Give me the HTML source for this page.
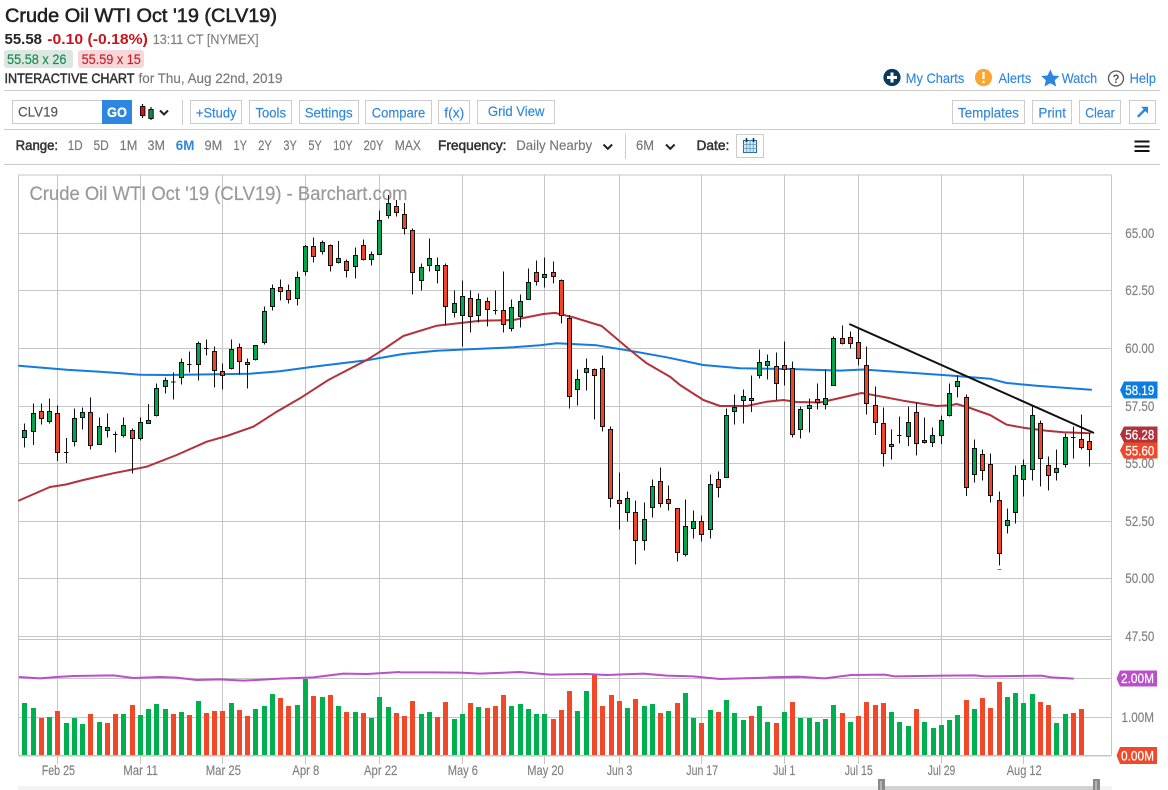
<!DOCTYPE html>
<html><head><meta charset="utf-8"><title>Crude Oil WTI Oct '19 (CLV19)</title>
<style>
html,body{margin:0;padding:0;background:#fff;width:1168px;height:790px;overflow:hidden}
svg{display:block}
text{font-family:"Liberation Sans",sans-serif;font-size:13.8px;fill:#777;stroke:#777;stroke-width:.15}
.b{fill:#2f86dd;stroke:#2f86dd}
.k{fill:#333;stroke:#333;stroke-width:.5}
.a{fill:#808080;stroke:#808080}
.w{fill:#fff;stroke:#fff;stroke-width:.25}
.c{shape-rendering:crispEdges}
.btn{fill:#fff;stroke:#ccc;shape-rendering:crispEdges}
</style></head><body>
<svg width="1168" height="790" viewBox="0 0 1168 790" xmlns="http://www.w3.org/2000/svg">
<rect width="1168" height="790" fill="#fff"/>
<!-- header -->
<text x="5" y="22" style="font-size:19.5px;fill:#222;stroke:#222;stroke-width:.55" textLength="272" lengthAdjust="spacingAndGlyphs">Crude Oil WTI Oct '19 (CLV19)</text>
<text x="4.5" y="44" style="font-size:15px;font-weight:bold;fill:#222;stroke:none" textLength="37.5" lengthAdjust="spacingAndGlyphs">55.58</text>
<text x="47.3" y="44" style="font-size:15px;font-weight:bold;fill:#c5161d;stroke:none" textLength="100.6" lengthAdjust="spacingAndGlyphs">-0.10 (-0.18%)</text>
<text x="152.7" y="44" style="fill:#808080;stroke:#808080" textLength="106" lengthAdjust="spacingAndGlyphs">13:11 CT [NYMEX]</text>
<rect x="4" y="50" width="69" height="18" rx="3" fill="#dbe7e0"/>
<text x="7" y="64" style="fill:#1a8a50;stroke:#1a8a50" textLength="59.5" lengthAdjust="spacingAndGlyphs">55.58 x 26</text>
<rect x="78" y="50" width="66" height="18" rx="3" fill="#f7d6da"/>
<text x="81.6" y="64" style="fill:#c8202c;stroke:#c8202c" textLength="59.2" lengthAdjust="spacingAndGlyphs">55.59 x 15</text>
<text x="4.5" y="83" class="k" textLength="130" lengthAdjust="spacingAndGlyphs">INTERACTIVE CHART</text>
<text x="138.5" y="83" textLength="144" lengthAdjust="spacingAndGlyphs">for Thu, Aug 22nd, 2019</text>
<!-- top-right links -->
<circle cx="892" cy="77.5" r="8.6" fill="#0b3a5e"/>
<path d="M892 72.5V82.5M887 77.5H897" stroke="#fff" stroke-width="3" fill="none"/>
<text x="905.8" y="83" class="b" textLength="58.5" lengthAdjust="spacingAndGlyphs">My Charts</text>
<circle cx="983.5" cy="77.5" r="8.6" fill="#fba72f"/>
<path d="M983.5 72V79" stroke="#fff" stroke-width="2.2"/><circle cx="983.5" cy="82" r="1.2" fill="#fff"/>
<text x="998.5" y="83" class="b" textLength="32.8" lengthAdjust="spacingAndGlyphs">Alerts</text>
<path d="M1050.3 69.5L1053 75.5 1059.5 76 1054.7 80.3 1056.2 86.5 1050.3 83.2 1044.4 86.5 1045.9 80.3 1041.1 76 1047.6 75.5Z" fill="#2b86e0"/>
<text x="1061.8" y="83" class="b" textLength="35.4" lengthAdjust="spacingAndGlyphs">Watch</text>
<circle cx="1116" cy="78.5" r="7.5" fill="none" stroke="#555" stroke-width="1.3"/>
<text x="1112.6" y="83" style="font-size:12px;font-weight:bold;fill:#555;stroke:none" textLength="6.8" lengthAdjust="spacingAndGlyphs">?</text>
<text x="1129.6" y="83" class="b" textLength="26.4" lengthAdjust="spacingAndGlyphs">Help</text>
<path class="c" d="M4 90.5H1160M4 129.5H1160M4 164.5H1160" stroke="#ccc" fill="none"/>
<!-- toolbar -->
<rect class="btn" x="12.5" y="100.5" width="90" height="23"/>
<text x="18" y="116.5" style="fill:#555;stroke:#555" textLength="40" lengthAdjust="spacingAndGlyphs">CLV19</text>
<rect class="c" x="102" y="100" width="30" height="24" fill="#2d87e0"/>
<text x="107" y="117" class="w" style="font-weight:bold" textLength="20" lengthAdjust="spacingAndGlyphs">GO</text>
<path d="M142.5 104V118M151 107V120" stroke="#111" stroke-width="1.2"/>
<rect x="140.5" y="106.5" width="4.4" height="9" fill="#d8131c" stroke="#111"/>
<rect x="148.8" y="109.5" width="4.4" height="9" fill="#0a8a40" stroke="#111"/>
<path d="M160 110.5l4 4 4-4" fill="none" stroke="#222" stroke-width="2"/>
<path class="c" d="M182.5 100V125" stroke="#ccc"/>
<rect class="btn" x="190.5" y="100.5" width="51" height="23"/>
<text x="195.9" y="117.5" class="b" textLength="40.6" lengthAdjust="spacingAndGlyphs">+Study</text>
<rect class="btn" x="249.5" y="100.5" width="42" height="23"/>
<text x="255.5" y="117.5" class="b" textLength="30.5" lengthAdjust="spacingAndGlyphs">Tools</text>
<rect class="btn" x="299.5" y="100.5" width="59" height="23"/>
<text x="304.7" y="117.5" class="b" textLength="48" lengthAdjust="spacingAndGlyphs">Settings</text>
<rect class="btn" x="365.5" y="100.5" width="66" height="23"/>
<text x="371.7" y="117.5" class="b" textLength="53.6" lengthAdjust="spacingAndGlyphs">Compare</text>
<rect class="btn" x="438.5" y="100.5" width="31" height="23"/>
<text x="444.3" y="117.5" class="b" textLength="20" lengthAdjust="spacingAndGlyphs">f(x)</text>
<rect class="btn" x="477.5" y="100.5" width="77" height="23"/>
<text x="487.9" y="116" class="b" textLength="56.6" lengthAdjust="spacingAndGlyphs">Grid View</text>
<rect class="btn" x="952.5" y="100.5" width="72" height="23"/>
<text x="958" y="117.5" class="b" textLength="61" lengthAdjust="spacingAndGlyphs">Templates</text>
<rect class="btn" x="1032.5" y="100.5" width="39" height="23"/>
<text x="1038.4" y="117.5" class="b" textLength="27.6" lengthAdjust="spacingAndGlyphs">Print</text>
<rect class="btn" x="1079.5" y="100.5" width="41" height="23"/>
<text x="1085.3" y="117.5" class="b" textLength="29.4" lengthAdjust="spacingAndGlyphs">Clear</text>
<rect class="btn" x="1129.5" y="100.5" width="26" height="23"/>
<path d="M1137.8 116.8L1145 109.6" stroke="#2b86e0" stroke-width="2.4"/><path d="M1141 106.8H1148V113.8Z" fill="#2b86e0"/>
<!-- range row -->
<text x="15.6" y="150" class="k" textLength="42.5" lengthAdjust="spacingAndGlyphs">Range:</text>
<text x="67.8" y="150" textLength="14.9" lengthAdjust="spacingAndGlyphs">1D</text>
<text x="93.5" y="150" textLength="15.3" lengthAdjust="spacingAndGlyphs">5D</text>
<text x="119.6" y="150" textLength="17.8" lengthAdjust="spacingAndGlyphs">1M</text>
<text x="147.5" y="150" textLength="17.5" lengthAdjust="spacingAndGlyphs">3M</text>
<text x="175.8" y="150" style="fill:#2f86dd;stroke:none;font-weight:bold" textLength="18.6" lengthAdjust="spacingAndGlyphs">6M</text>
<text x="204.5" y="150" textLength="17.8" lengthAdjust="spacingAndGlyphs">9M</text>
<text x="233.5" y="150" textLength="13.4" lengthAdjust="spacingAndGlyphs">1Y</text>
<text x="258.1" y="150" textLength="13.8" lengthAdjust="spacingAndGlyphs">2Y</text>
<text x="283.4" y="150" textLength="13.4" lengthAdjust="spacingAndGlyphs">3Y</text>
<text x="308.4" y="150" textLength="13.4" lengthAdjust="spacingAndGlyphs">5Y</text>
<text x="333.3" y="150" textLength="19.4" lengthAdjust="spacingAndGlyphs">10Y</text>
<text x="363.5" y="150" textLength="20.1" lengthAdjust="spacingAndGlyphs">20Y</text>
<text x="394.8" y="150" textLength="26.1" lengthAdjust="spacingAndGlyphs">MAX</text>
<text x="438" y="150" class="k" textLength="68.5" lengthAdjust="spacingAndGlyphs">Frequency:</text>
<text x="516.2" y="150" textLength="76" lengthAdjust="spacingAndGlyphs">Daily Nearby</text>
<path d="M603.5 144.5l4.3 4.3 4.3-4.3" fill="none" stroke="#222" stroke-width="2"/>
<path class="c" d="M625.5 134V159" stroke="#ccc"/>
<text x="636" y="150" textLength="18" lengthAdjust="spacingAndGlyphs">6M</text>
<path d="M666 144.5l4.3 4.3 4.3-4.3" fill="none" stroke="#222" stroke-width="2"/>
<text x="696.5" y="150" class="k" textLength="32.8" lengthAdjust="spacingAndGlyphs">Date:</text>
<rect class="btn" x="736.5" y="134.5" width="27" height="23"/>
<rect x="743.5" y="140.5" width="13" height="12" fill="#dbe8f2" stroke="#2a6a90"/>
<path d="M746.8 140V153M750 140V153M753.2 140V153M743 144.5H757M743 148.5H757" stroke="#5a9ac0" stroke-width=".8"/>
<path d="M746.5 138V142M753.5 138V142" stroke="#0b3a5e" stroke-width="1.6"/>
<path class="c" d="M1134.5 141.5H1149.5M1134.5 146.5H1149.5M1134.5 151H1149.5" stroke="#111" stroke-width="2.4"/>
<!-- chart grid -->
<g class="c" stroke="#c6c6c6" fill="none">
<path d="M18.5 175H1111.5M18.5 233.5H1111.5M18.5 290.5H1111.5M18.5 348.5H1111.5M18.5 406.5H1111.5M18.5 463.5H1111.5M18.5 521.5H1111.5M18.5 578.5H1111.5M18.5 636.5H1111.5M18.5 639.5H1111.5M18.5 678.5H1111.5M18.5 717.5H1111.5"/>
<path d="M18.5 175V755.5M1111.5 175V755.5"/>
<path d="M57.5 175V764M140.5 175V764M222.5 175V764M305.5 175V764M379.5 175V764M462.5 175V764M544.5 175V764M619.5 175V764M701.5 175V764M784.5 175V764M858.5 175V764M941.5 175V764M1023.5 175V764"/>
<path d="M18.5 755.5H1111.5" stroke-width="1.5"/>
</g>
<text x="29.5" y="200" style="font-size:19px;fill:#999;stroke:#999;stroke-width:.2" textLength="378" lengthAdjust="spacingAndGlyphs">Crude Oil WTI Oct '19 (CLV19) - Barchart.com</text>
<!-- moving averages -->
<g fill="none" stroke-linejoin="round" stroke-linecap="round">
<path stroke="#127be3" stroke-width="2" d="M19 365.7L66.7 369.7 100 371.7 140 374.7 166.7 375 250 373.7 280 371.3 313 366.7 366.7 360.3 403 354 436.7 350.7 513 347.3 540 345.3 556.7 343.2 596.7 345.3 633.3 351.3 666.7 357.3 703.3 365 740 368.3 790 369 840 370.6 863.3 369.5 903.3 372.3 953.3 375.7 990 378.7 1006.7 383 1036.7 385.7 1091 389.7"/>
<path stroke="#b0323a" stroke-width="2" d="M19 500.5L50 487 66 484.5 83.3 480 113 473.3 146.7 466.7 176.7 455 206.7 441.7 226.7 436 253.3 426.7 276.7 411.7 300 398.3 328.3 380 366.7 360 380 351.7 403.3 336 436.7 325.7 480 320.7 513.3 320 543.3 314 555 312.9 573.3 317.3 601.7 326 630 350 646.7 363.3 670 376.7 680 385 703.3 400 720 406 746.7 406 766.7 401.7 783.3 400 796.7 402 820 402.5 840 398 861.7 393 876.7 395.7 903.3 400.7 936.7 406 950 405.3 956.7 404 970 408 990 415 1006.7 424.7 1023.3 427.7 1046.7 430.7 1063.3 432.3 1090 433.3"/>
</g>
<!-- candles group A -->
<g transform="translate(0 180) scale(.33333)" class="c" stroke="#111" stroke-width="3" fill="none">
<path d="M73 730V803M100 670V795M124 670V734M148 655V731M172 676V843M199 774V849M192 818H206M223 685V800M247 682V749M271 652V808M298 712V794M322 700V773M346 754V818M339 764H353M370 712V772M397 745V880M421 712V781M445 672V730M469 610V709M496 592V641M520 577V659M513 606H527M544 535V613M568 514V578M561 553H575M595 484V602M619 478V527M612 505H626M643 499V623M667 550V629M694 478V568M718 490V583M742 535V626M766 496V541M793 379V493M817 313V391M841 298V361M865 313V371M892 274V377"/>
<path fill="#00a54f" d="M67 751H79V772H67ZM94 700H106V754H94ZM142 694H154V724H142ZM217 715H229V784H217ZM241 697H253V712H241ZM292 739H304V793H292ZM316 742H328V751H316ZM364 736H376V766H364ZM415 727H427V775H415ZM439 721H451V730H439ZM463 625H475V706H463ZM490 601H502V619H490ZM538 547H550V592H538ZM589 490H601V553H589ZM688 508H700V565H688ZM760 496H772V538H760ZM787 394H799V487H787ZM811 325H823V379H811ZM886 292H898V355H886Z"/>
<path fill="#f0452a" d="M118 694H130V715H118ZM166 700H178V817H166ZM265 697H277V796H265ZM391 751H403V775H391ZM637 514H649V571H637ZM661 574H673V586H661ZM712 502H724V544H712ZM736 547H748V553H736ZM835 322H847V334H835ZM859 331H871V358H859Z"/>
</g>
<!-- candles group B -->
<g transform="translate(280 180) scale(.33333)" class="c" stroke="#111" stroke-width="3" fill="none">
<path d="M76 195V287M100 172V248M127 181V223M151 193V275M175 183V251M199 238V293M226 202V296M250 178V241M274 214V257M298 91V223M325 45V116M349 60V110M373 69V164M397 145V344M424 250V332M448 175V275M472 232V311M496 250V437M523 331V413M547 301V500M571 331V458M595 340V428M622 352V440M646 331V404M639 391H653M670 274V458M694 358V455M721 343V443M745 265V358M769 241V317M793 232V323M820 244V311M844 298V431"/>
<path fill="#00a54f" d="M70 199H82V274H70ZM121 187H133V214H121ZM169 235H181V247H169ZM220 226H232V259H220ZM268 223H280V238H268ZM292 121H304V223H292ZM319 70H331V106H319ZM418 262H430V301H418ZM442 235H454V256H442ZM466 256H478V271H466ZM517 370H529V397H517ZM541 349H553V406H541ZM589 358H601V406H589ZM688 382H700V445H688ZM715 364H727V409H715ZM739 307H751V358H739ZM787 283H799V292H787Z"/>
<path fill="#f0452a" d="M94 199H106V229H94ZM145 196H157V256H145ZM193 244H205V271H193ZM244 196H256V238H244ZM343 79H355V97H343ZM367 103H379V145H367ZM391 151H403V277H391ZM490 256H502V379H490ZM565 355H577V409H565ZM616 364H628V388H616ZM664 391H676V433H664ZM763 277H775V304H763ZM814 277H826V289H814ZM838 301H850V406H838Z"/>
</g>
<!-- candles group C -->
<g transform="translate(540 280) scale(.33333)" class="c" stroke="#111" stroke-width="3" fill="none">
<path d="M88 105V386M112 268V377M139 235V332M163 265V419M187 226V455M211 439V683M238 577V749M262 634V725M286 661V854M313 667V812M337 598V713M361 562V683M385 616V692M412 685V845M436 658V830M460 691V776M484 706V785M511 583V776M535 574V653M559 385V592M583 343V434M610 328V430M634 286V396M658 208V296M682 223V299M709 217V360M733 184V317M757 244V472M781 379V476M808 355V458M832 310V388M856 268V389"/>
<path fill="#00a54f" d="M106 298H118V328H106ZM133 265H145V277H133ZM256 655H268V697H256ZM307 718H319V781H307ZM331 619H343V682H331ZM430 739H442V823H430ZM454 724H466V745H454ZM505 613H517V748H505ZM553 406H565V592H553ZM577 382H589V394H577ZM604 349H616V361H604ZM628 355H640V361H628ZM652 247H664V286H652ZM676 244H688V256H676ZM775 388H787V448H775ZM802 376H814V385H802ZM850 355H862V373H850Z"/>
<path fill="#f0452a" d="M82 115H94V349H82ZM157 268H169V286H157ZM181 265H193V439H181ZM205 448H217V655H205ZM232 661H244V670H232ZM280 697H292V781H280ZM355 604H367V670H355ZM379 658H391V670H379ZM406 685H418V817H406ZM478 724H490V763H478ZM529 598H541V622H529ZM703 259H715V310H703ZM727 256H739V268H727ZM751 265H763V463H751ZM826 358H838V367H826Z"/>
</g>
<!-- candles group D -->
<g transform="translate(820 310) scale(.33333)" class="c" stroke="#111" stroke-width="3" fill="none">
<path d="M40 80V226M67 47V104M91 64V116M115 55V167M140 109V314M166 229V375M190 292V470M214 358V449M238 319V401M231 376H245M265 289V408M289 277V437M313 322V400M337 352V411M364 316V402M388 220V319M412 197V263M439 253V558M463 388V518M487 418V512M511 430V578M538 544V767M562 595V671M586 466V641M610 448V560M637 286V512M661 331V530M685 439V542M709 418V512M736 370V472M760 349V445M753 382H767M784 313V418M808 370V469"/>
<path fill="#00a54f" d="M34 85H46V226H34ZM259 337H271V379H259ZM307 391H319V397H307ZM331 376H343V397H331ZM358 331H370V376H358ZM382 250H394V316H382ZM406 214H418V229H406ZM457 415H469V493H457ZM556 631H568V646H556ZM580 496H592V607H580ZM604 466H616V508H604ZM631 316H643V479H631ZM703 475H715V487H703ZM730 382H742V463H730Z"/>
<path fill="#f0452a" d="M61 85H73V101H61ZM85 82H97V100H85ZM109 97H121V145H109ZM134 166H146V280H134ZM160 286H172V337H160ZM184 340H196V430H184ZM208 403H220V409H208ZM283 307H295V400H283ZM433 262H445V532H433ZM481 433H493V481H481ZM505 463H517V556H505ZM532 571H544V730H532ZM655 340H667V445H655ZM679 466H691V496H679ZM778 388H790V412H778ZM802 394H814V418H802Z"/>
<path stroke="#f0452a" d="M532 778H544"/>
</g>
<path d="M849.3 324L1094 433" stroke="#111" stroke-width="2" fill="none"/>
<!-- volume -->
<g transform="translate(0 630) scale(.33333)" class="c" stroke-width="15" fill="none">
<path stroke="#00b04f" d="M73 219V375M100 234V375M148 261V375M199 279V375M223 264V375M247 282V375M298 276V375M370 252V375M421 255V375M445 237V375M469 222V375M496 237V375M544 246V375M595 213V375M694 219V375M766 237V375M793 228V375M817 192V375M892 225V375M916 147V375M967 201V375M1015 228V375M1066 246V375M1114 264V375M1138 201V375M1165 231V375"/>
<path stroke="#f04828" d="M124 264V375M172 243V375M271 252V375M322 279V375M346 252V375M397 225V375M520 252V375M568 255V375M619 249V375M643 243V375M667 243V375M718 240V375M742 258V375M841 204V375M865 228V375M940 198V375M991 195V375M1039 246V375M1090 249V375M1189 249V375"/>
<path stroke="#bb4ecb" stroke-width="6" class="x" d="M57 141L120 145 170 141 220 138 340 136 400 144 480 141 530 143 590 150 660 148 730 152 840 146 940 142 1030 131 1100 132 1200 126" shape-rendering="auto"/>
</g>
<g transform="translate(400 630) scale(.33333)" class="c" stroke-width="15" fill="none">
<path stroke="#f04828" d="M13 258V375M37 213V375M112 261V375M136 216V375M211 219V375M262 234V375M286 228V375M310 195V375M460 267V375M484 240V375M508 183V375M583 135V375M607 228V375M634 195V375M658 213V375M706 207V375M781 249V375M832 219V375M904 279V375M955 246V375M1054 258V375M1129 279V375M1177 216V375"/>
<path stroke="#00b04f" d="M64 252V375M88 246V375M163 267V375M187 252V375M235 231V375M334 228V375M361 222V375M385 237V375M409 252V375M433 252V375M532 243V375M559 183V375M682 234V375M733 228V375M757 222V375M805 243V375M856 189V375M880 264V375M931 240V375M979 210V375M1003 249V375M1030 270V375M1078 228V375M1102 276V375M1153 246V375"/>
<path stroke="#bb4ecb" stroke-width="6" d="M0 127L100 127 180 128 240 131 360 126 450 134 560 132 620 135 730 131 800 137 880 139 960 147 1100 143 1200 141" shape-rendering="auto"/>
</g>
<g transform="translate(768 630) scale(.33333)" class="c" stroke-width="15" fill="none">
<path stroke="#00b04f" d="M97 264V375M124 264V375M148 276V375M172 267V375M196 225V375M247 276V375M370 246V375M394 276V375M421 288V375M469 276V375M496 294V375M520 285V375M544 270V375M568 255V375M619 237V375M718 201V375M742 189V375M766 219V375M793 192V375M865 279V375M892 252V375"/>
<path stroke="#f04828" d="M223 249V375M271 258V375M295 216V375M322 225V375M346 219V375M445 237V375M595 210V375M643 204V375M667 234V375M694 156V375M817 216V375M841 225V375M916 249V375M941 237V375"/>
<path stroke="#bb4ecb" stroke-width="6" d="M0 142L90 140 170 145 250 135 350 134 380 139 530 137 620 136 650 139 820 137 850 142 917 146" shape-rendering="auto"/>
</g>
<!-- right axis -->
<text x="1125.3" y="238" class="a" textLength="29" lengthAdjust="spacingAndGlyphs">65.00</text>
<text x="1125.3" y="295" class="a" textLength="29" lengthAdjust="spacingAndGlyphs">62.50</text>
<text x="1125.3" y="353" class="a" textLength="29" lengthAdjust="spacingAndGlyphs">60.00</text>
<text x="1125.3" y="411" class="a" textLength="29" lengthAdjust="spacingAndGlyphs">57.50</text>
<text x="1125.3" y="468" class="a" textLength="29" lengthAdjust="spacingAndGlyphs">55.00</text>
<text x="1125.3" y="526" class="a" textLength="29" lengthAdjust="spacingAndGlyphs">52.50</text>
<text x="1125.3" y="583" class="a" textLength="29" lengthAdjust="spacingAndGlyphs">50.00</text>
<text x="1125.3" y="641" class="a" textLength="29" lengthAdjust="spacingAndGlyphs">47.50</text>
<text x="1121.5" y="722" class="a" textLength="32.5" lengthAdjust="spacingAndGlyphs">1.00M</text>
<path d="M1124 381.5H1157.5V398.5H1124L1120 390Z" fill="#0a7ee0"/>
<text x="1125.3" y="395" class="w" textLength="29" lengthAdjust="spacingAndGlyphs">58.19</text>
<path d="M1124 426.5H1157.5V442.5H1124L1120 434.5Z" fill="#b0323a"/>
<text x="1125.3" y="439.5" class="w" textLength="29" lengthAdjust="spacingAndGlyphs">56.28</text>
<path d="M1124 442.5H1157.5V458.5H1124L1120 450.5Z" fill="#f04828"/>
<text x="1125.3" y="455.5" class="w" textLength="29" lengthAdjust="spacingAndGlyphs">55.60</text>
<path d="M1120 670.5H1157V686.5H1120L1116.5 678.5Z" fill="#bb4ecb"/>
<text x="1121" y="683" class="w" textLength="33" lengthAdjust="spacingAndGlyphs">2.00M</text>
<path d="M1120 747H1157V764H1120L1116.5 755.5Z" fill="#f04828"/>
<text x="1121" y="760.5" class="w" textLength="33" lengthAdjust="spacingAndGlyphs">0.00M</text>
<!-- date axis -->
<text x="41.7" y="775" class="a" textLength="33.3" lengthAdjust="spacingAndGlyphs">Feb 25</text>
<text x="123.3" y="775" class="a" textLength="34.7" lengthAdjust="spacingAndGlyphs">Mar 11</text>
<text x="205.7" y="775" class="a" textLength="35.3" lengthAdjust="spacingAndGlyphs">Mar 25</text>
<text x="292.3" y="775" class="a" textLength="27" lengthAdjust="spacingAndGlyphs">Apr 8</text>
<text x="364" y="775" class="a" textLength="33.3" lengthAdjust="spacingAndGlyphs">Apr 22</text>
<text x="447.7" y="775" class="a" textLength="30.3" lengthAdjust="spacingAndGlyphs">May 6</text>
<text x="527.3" y="775" class="a" textLength="36.4" lengthAdjust="spacingAndGlyphs">May 20</text>
<text x="606.7" y="775" class="a" textLength="25.6" lengthAdjust="spacingAndGlyphs">Jun 3</text>
<text x="686.3" y="775" class="a" textLength="31.7" lengthAdjust="spacingAndGlyphs">Jun 17</text>
<text x="773.3" y="775" class="a" textLength="22" lengthAdjust="spacingAndGlyphs">Jul 1</text>
<text x="844.7" y="775" class="a" textLength="28" lengthAdjust="spacingAndGlyphs">Jul 15</text>
<text x="927.7" y="775" class="a" textLength="27.6" lengthAdjust="spacingAndGlyphs">Jul 29</text>
<text x="1006.7" y="775" class="a" textLength="35" lengthAdjust="spacingAndGlyphs">Aug 12</text>
<!-- scrollbar -->
<rect class="c" x="18" y="786" width="1094" height="4" fill="#f3f3f3"/>
<rect class="c" x="882" y="786" width="214" height="4" fill="#d2d2d2"/>
<rect class="c" x="878" y="779" width="7" height="11" fill="#8a8a8a"/>
<path class="c" d="M881 781V790" stroke="#ddd"/>
<rect class="c" x="1093" y="779" width="7" height="11" fill="#8a8a8a"/>
<path class="c" d="M1096 781V790" stroke="#ddd"/>
</svg>
</body></html>
